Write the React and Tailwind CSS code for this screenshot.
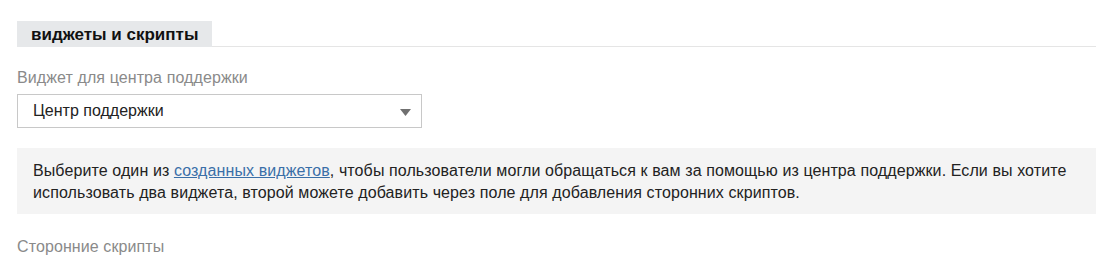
export default function App() {
  return (
    <div className="bg-white min-h-[265px] pl-[17px] pr-[16px] pt-[21px] font-['Liberation_Sans',Arial,sans-serif] text-[16px]">
      <div className="flex items-end border-b border-[#e5e5e5]">
        <div className="bg-[#e6e8ea] h-[26px] w-[195px] pl-[14px] flex items-center font-bold text-[17px] text-[#111] leading-none -mb-px">
          виджеты и скрипты
        </div>
      </div>

      <div className="mt-[21px] text-[#8a8a8a] leading-[20px] tracking-[0.1px]">Виджет для центра поддержки</div>
      <div className="mt-[6px] relative w-[405px] h-[34px] border border-[#c8c8c8] bg-white flex items-center pl-[15px] text-[#222]">
        Центр поддержки
        <svg className="absolute right-[10px] top-[14px]" width="11" height="7" viewBox="0 0 11 7">
          <path d="M0 0 H11 L5.5 7 Z" fill="#707070" />
        </svg>
      </div>

      <div className="mt-[20px] bg-[#f4f4f4] px-[16px] pt-[12px] pb-[10px] leading-[22px] text-[#222] tracking-[0.1px]">
        Выберите один из{' '}
        <a href="#" className="text-[#3a6fa8] underline">созданных виджетов</a>
        , чтобы пользователи могли обращаться к вам за помощью из центра поддержки. Если вы хотите использовать два виджета, второй можете добавить через поле для добавления сторонних скриптов.
      </div>

      <div className="mt-[23px] text-[#8a8a8a] leading-[20px] tracking-[0.1px]">Сторонние скрипты</div>
    </div>
  );
}
